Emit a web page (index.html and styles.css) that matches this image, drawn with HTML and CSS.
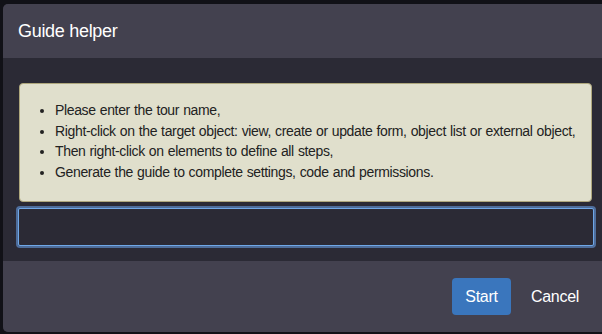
FILE: index.html
```html
<!DOCTYPE html>
<html lang="en">
<head>
    <meta charset="UTF-8">
    <meta name="viewport" content="width=device-width, initial-scale=1.0">
    <title>Guide helper</title>
    <link rel="stylesheet" href="styles.css">
</head>
<body>
    <div class="modal">
        <div class="modal-header">
            <h4 class="modal-title">Guide helper</h4>
        </div>
        <div class="modal-body">
            <div class="alert">
                <ul>
                    <li>Please enter the tour name,</li>
                    <li>Right-click on the target object: view, create or update form, object list or external object,</li>
                    <li>Then right-click on elements to define all steps,</li>
                    <li>Generate the guide to complete settings, code and permissions.</li>
                </ul>
            </div>
            <input type="text" class="form-control" autofocus>
        </div>
        <div class="modal-footer">
            <button class="btn btn-primary">Start</button>
            <button class="btn btn-link">Cancel</button>
        </div>
    </div>
</body>
</html>
```

FILE: styles.css
```css
html, body {
    margin: 0;
    padding: 0;
    overflow: hidden;
}

body {
    font-family: "Liberation Sans", Arial, sans-serif;
    background-color: #111117;
    width: 602px;
    height: 334px;
    padding-top: 4px;
    padding-left: 3px;
    box-sizing: border-box;
}

.modal {
    width: 604px;
    border-radius: 5px;
    overflow: hidden;
    background-color: #2b2a35;
}

.modal-header {
    background-color: #43414f;
    height: 54px;
    padding: 0 15px;
    display: flex;
    align-items: center;
}

.modal-title {
    margin: 0;
    font-size: 18px;
    font-weight: normal;
    color: #ffffff;
    letter-spacing: -0.3px;
}

.modal-body {
    padding: 25px 15px 15px 16px;
}

.alert {
    background-color: #e0dfcc;
    border: 1px solid #aea77c;
    border-radius: 4px;
    padding: 16px 10px 19px 15px;
    color: #222222;
    font-size: 14px;
    line-height: 20.5px;
    letter-spacing: -0.35px;
    word-spacing: 0.5px;
    white-space: nowrap;
}

.alert ul {
    margin: 0;
    padding-left: 20px;
}

.form-control {
    display: block;
    box-sizing: border-box;
    width: 576px;
    height: 38px;
    margin: 6px 0 0 -1px;
    background-color: #2b2a35;
    border: 1px solid #6fa7e6;
    border-radius: 2px;
    box-shadow: 0 0 0 2px #4e6d9b;
    outline: none;
    color: #ffffff;
    font-size: 14px;
    padding: 6px 12px;
}

.modal-footer {
    background-color: #43414f;
    height: 71px;
    padding: 0 16px 0 15px;
    display: flex;
    align-items: center;
    justify-content: flex-end;
    gap: 8px;
}

.btn {
    font-family: "Liberation Sans", Arial, sans-serif;
    font-size: 16px;
    height: 37px;
    padding: 0 12px;
    border: none;
    border-radius: 4px;
    color: #ffffff;
    cursor: pointer;
    letter-spacing: -0.3px;
}

.btn-primary {
    background-color: #3a76bd;
    width: 59px;
    padding: 0;
}

.btn-link {
    background: none;
    padding: 0 12px;
}
```
